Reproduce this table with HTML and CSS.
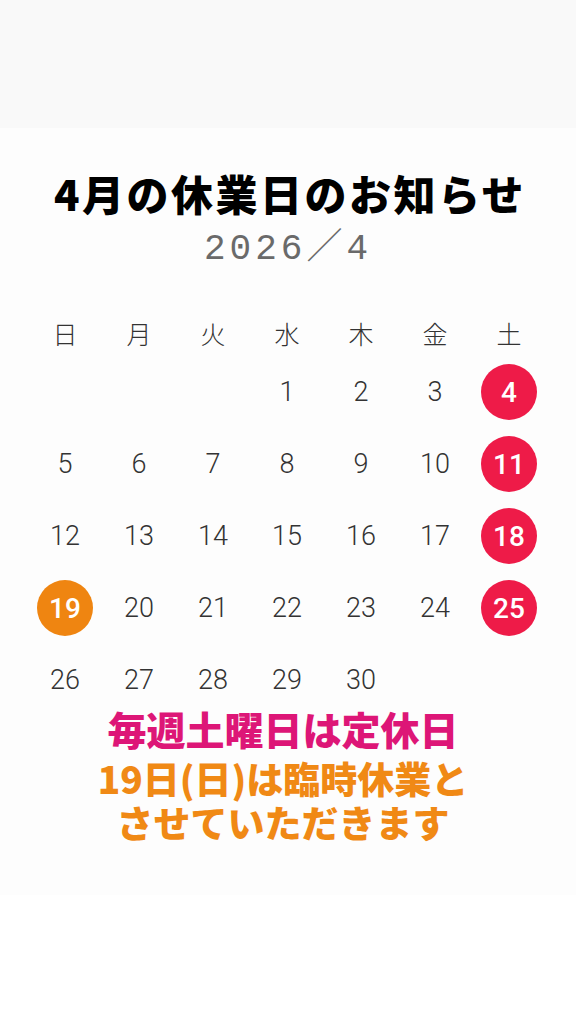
FILE: index.html
```html
<!DOCTYPE html>
<html lang="ja">
<head>
<meta charset="utf-8">
<title>4月の休業日のお知らせ</title>
<link rel="stylesheet" href="styles.css">
</head>
<body>
<div class="top-band"></div>
<main class="card">
  <h1 class="title">4月の休業日のお知らせ</h1>
  <div class="date">2026／4</div>
  <div class="calendar">
    <div class="wd">日</div><div class="wd">月</div><div class="wd">火</div><div class="wd">水</div><div class="wd">木</div><div class="wd">金</div><div class="wd">土</div>
  </div>
  <div class="calendar days">
    <div class="d"></div><div class="d"></div><div class="d"></div>
    <div class="d">1</div><div class="d">2</div><div class="d">3</div><div class="d"><span class="dot red">4</span></div>
    <div class="d">5</div><div class="d">6</div><div class="d">7</div><div class="d">8</div><div class="d">9</div><div class="d">10</div><div class="d"><span class="dot red">11</span></div>
    <div class="d">12</div><div class="d">13</div><div class="d">14</div><div class="d">15</div><div class="d">16</div><div class="d">17</div><div class="d"><span class="dot red">18</span></div>
    <div class="d"><span class="dot orange">19</span></div><div class="d">20</div><div class="d">21</div><div class="d">22</div><div class="d">23</div><div class="d">24</div><div class="d"><span class="dot red">25</span></div>
    <div class="d">26</div><div class="d">27</div><div class="d">28</div><div class="d">29</div><div class="d">30</div><div class="d"></div><div class="d"></div>
  </div>
  <p class="note pink">毎週土曜日は定休日</p>
  <p class="note orange-text">19日(日)は臨時休業と<br>させていただきます</p>
</main>
<div class="bottom"></div>
</body>
</html>
```
FILE: styles.css
```css
html, body {
  margin: 0;
  padding: 0;
  background: #ffffff;
}
body {
  width: 576px;
  height: 1024px;
  overflow: hidden;
  font-family: "Noto Sans CJK JP", "Noto Sans", sans-serif;
  color: #333;
}
.top-band {
  height: 128px;
  background: #f9f9f9;
}
.card {
  height: 767px;
  background: #fdfdfd;
  padding-top: 40px;
  box-sizing: border-box;
  display: flex;
  flex-direction: column;
  align-items: center;
}
.title {
  margin: 0;
  font-size: 42px;
  line-height: 50px;
  font-weight: 900;
  color: #000;
  letter-spacing: 2.5px;
  padding-left: 4px;
}
.date {
  margin-top: 12px;
  font-family: "Liberation Mono", "Noto Sans CJK JP", monospace;
  font-size: 36px;
  line-height: 40px;
  color: #6a6a6a;
  letter-spacing: 4px;
  font-weight: 400;
}
.calendar {
  display: grid;
  grid-template-columns: repeat(7, 74px);
  margin-top: 43px;
  margin-right: 2px;
}
.wd {
  text-align: center;
  font-size: 25px;
  line-height: 40px;
  font-weight: 300;
  color: #333;
}
.days {
  margin-top: 10px;
  grid-auto-rows: 58px;
  row-gap: 14px;
}
.d {
  display: flex;
  align-items: center;
  justify-content: center;
  font-family: Roboto, "Noto Sans", sans-serif;
  font-size: 27px;
  font-weight: 300;
  color: #333;
}
.dot {
  width: 56px;
  height: 56px;
  border-radius: 50%;
  display: flex;
  align-items: center;
  justify-content: center;
  color: #fff;
  font-weight: 500;
  font-size: 28px;
}
.red { background: #ee1b48; }
.orange { background: #ef8511; }
.note {
  margin: 0;
  text-align: center;
  font-weight: 900;
  padding-right: 10px;
}
.pink {
  color: #dd1677;
  font-size: 39px;
  line-height: 38px;
}
.orange-text {
  color: #f08915;
  font-size: 37px;
  line-height: 44px;
  margin-top: 9px;
}
.bottom {
  height: 129px;
  background: #ffffff;
}
```
